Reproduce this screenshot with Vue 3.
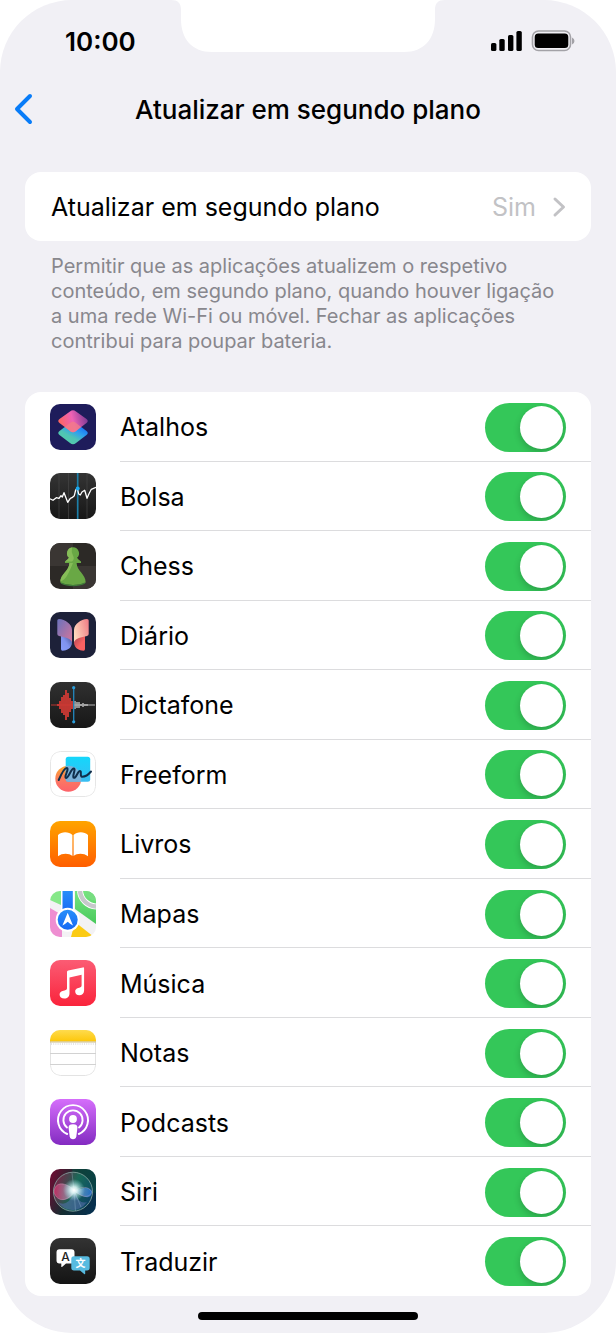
<script setup>
import { ref } from 'vue';

// Lista de aplicações com o estado de cada interruptor
var apps = ref([
  { id: 'atalhos', name: 'Atalhos', enabled: true },
  { id: 'bolsa', name: 'Bolsa', enabled: true },
  { id: 'chess', name: 'Chess', enabled: true },
  { id: 'diario', name: 'Diário', enabled: true },
  { id: 'dictafone', name: 'Dictafone', enabled: true },
  { id: 'freeform', name: 'Freeform', enabled: true },
  { id: 'livros', name: 'Livros', enabled: true },
  { id: 'mapas', name: 'Mapas', enabled: true },
  { id: 'musica', name: 'Música', enabled: true },
  { id: 'notas', name: 'Notas', enabled: true },
  { id: 'podcasts', name: 'Podcasts', enabled: true },
  { id: 'siri', name: 'Siri', enabled: true },
  { id: 'traduzir', name: 'Traduzir', enabled: true }
]);

// Barras do dictafone: [x, metade da altura]
const redBars = [[8, 1], [10, 4], [12, 8], [14, 10], [16, 15], [18, 12], [20, 7], [22, 4]];
const greyBars = [[25, 4], [27, 3], [29, 3], [31, 1], [33, 2], [35, 1], [37, 1]];
</script>

<template>
  <div class="phone">
    <div class="status-bar">
      <span class="time">10:00</span>
      <svg class="notch" width="274" height="52" viewBox="0 0 274 52">
        <path d="M0 0C7 0 10 3 10 10V19C10 39 21 52 41 52H233C253 52 264 39 264 19V10C264 3 267 0 274 0Z" fill="#fff" />
      </svg>
      <svg class="indicators" width="84" height="22" viewBox="0 0 84 22">
        <rect x="0" y="13" width="5.4" height="8" rx="1.6" />
        <rect x="8.3" y="9" width="5.4" height="12" rx="1.6" />
        <rect x="17" y="5" width="5.4" height="16" rx="1.6" />
        <rect x="25.4" y="1" width="5.4" height="20" rx="1.6" />
        <rect x="41.5" y="1" width="38" height="19.5" rx="6" fill="none" stroke="#a3a2a7" stroke-width="1.6" />
        <rect x="43.7" y="3.5" width="33.6" height="14.5" rx="3.5" />
        <path d="M81 7.5Q83.5 8.5 83.5 11T81 14.5Z" fill="#a3a2a7" />
      </svg>
    </div>

    <header class="nav">
      <button class="btn-back" type="button" aria-label="Voltar">
        <svg width="20" height="32" viewBox="0 0 20 32">
          <path d="M17 3L4 16L17 29" fill="none" stroke="#087cf8" stroke-width="4" stroke-linecap="round" stroke-linejoin="round" />
        </svg>
      </button>
      <h1>Atualizar em segundo plano</h1>
    </header>

    <main>
      <!-- Definição geral -->
      <button class="card setting" type="button">
        <span>Atualizar em segundo plano</span>
        <span class="setting-value">Sim</span>
        <svg width="14" height="22" viewBox="0 0 14 22">
          <path d="M3 3L11.5 11L3 19" fill="none" stroke="#c2c2c5" stroke-width="3" stroke-linecap="round" stroke-linejoin="round" />
        </svg>
      </button>
      <p class="note">
        Permitir que as aplicações atualizem o respetivo conteúdo, em segundo plano, quando houver ligação a uma rede Wi-Fi ou móvel. Fechar as aplicações contribui para poupar bateria.
      </p>

      <!-- Aplicações -->
      <ul class="card app-list">
        <li v-for="app in apps" :key="app.id" class="app-item">
          <svg class="app-icon" width="46" height="46" viewBox="0 0 46 46" aria-hidden="true">
            <g v-if="app.id === 'atalhos'">
              <linearGradient id="sc1" x1="0" y1="0.6" x2="1" y2="0.4">
                <stop offset="0" stop-color="#ff6659" />
                <stop offset="0.5" stop-color="#ee62b5" />
                <stop offset="1" stop-color="#7c3994" />
              </linearGradient>
              <linearGradient id="sc2" x1="0.2" y1="1" x2="0.8" y2="0.2">
                <stop offset="0" stop-color="#55cfa7" />
                <stop offset="0.4" stop-color="#4fc4b4" />
                <stop offset="0.7" stop-color="#2e9ff0" />
                <stop offset="1" stop-color="#1874f5" />
              </linearGradient>
              <rect width="46" height="46" fill="#1e1c5b" />
              <path d="M20 19Q23 16.5 26 19L36.5 27Q39 29 36.5 31L26 39Q23 41.5 20 39L9.5 31Q7 29 9.5 27Z" fill="url(#sc2)" />
              <path d="M20 7.5Q23 5 26 7.5L36.5 15Q39 17 36.5 19L26 27Q23 29.5 20 27L9.5 19Q7 17 9.5 15Z" fill="url(#sc1)" />
              <path d="M23 17.5Q24.5 17.5 26 19L31.2 23L26 27Q23 29.5 20 27L14.8 23L20 19Q21.5 17.5 23 17.5Z" fill="#f37d85" opacity="0.75" />
            </g>

            <g v-else-if="app.id === 'bolsa'">
              <linearGradient id="st1" x1="0" y1="0" x2="0" y2="1">
                <stop offset="0" stop-color="#343434" />
                <stop offset="1" stop-color="#171717" />
              </linearGradient>
              <rect width="46" height="46" fill="url(#st1)" />
              <path d="M9 0V46M18.5 0V46M37 0V46" stroke="#454545" stroke-width="0.7" />
              <path d="M27.7 0V46" stroke="#1d7fa8" stroke-width="1.7" />
              <path d="M0 25.7L3 27.3L6.3 24.7L9 25.3L11 22.7L12.3 24L14 19.7L17.7 29.3L20.3 25.3L22 24.7L24.3 22.7L25.7 17L27.3 15.7L28.7 21L30.3 22L32 19L34.7 17.3L37 25.3L39 20.7L41.3 16.3L46 14.3" fill="none" stroke="#fff" stroke-width="1.3" stroke-linejoin="round" />
              <circle cx="27.7" cy="15.5" r="2" fill="#1ba7ee" />
            </g>

            <g v-else-if="app.id === 'chess'">
              <rect width="46" height="46" fill="#2c2926" />
              <path d="M0 0H23V23H0ZM23 23H46V46H23Z" fill="#3a3633" />
              <path d="M23 4.3A6 6 0 0 1 27 14.8Q28 16.5 31 18.5V20H26.6C26.8 28 35.7 31 35.7 39.5Q32 42 23 42T10.3 39.5C10.3 31 19.2 28 19.4 20H15V18.5Q18 16.5 19 14.8A6 6 0 0 1 23 4.3Z" fill="#69a845" />
              <path d="M22 4.4A6 6 0 0 0 19 14.8Q18 16.5 15 18.5H22Q25 16 23 12.5T22 4.4ZM19.4 20C19.2 28 10.3 31 10.3 38.5Q15 37 18 31T23 20Z" fill="#86bd58" />
              <path d="M11 40Q16 42.7 23 42.7T35 40" fill="none" stroke="#3f7a3a" stroke-width="1.2" />
            </g>

            <g v-else-if="app.id === 'diario'">
              <linearGradient id="jr1" x1="0" y1="0" x2="1" y2="1">
                <stop offset="0" stop-color="#6a73bd" />
                <stop offset="1" stop-color="#d4759a" />
              </linearGradient>
              <linearGradient id="jr2" x1="0" y1="0.6" x2="1" y2="0.2">
                <stop offset="0" stop-color="#ffd9bd" />
                <stop offset="1" stop-color="#f18087" />
              </linearGradient>
              <linearGradient id="jr3" x1="0" y1="1" x2="1" y2="0">
                <stop offset="0" stop-color="#879dfb" />
                <stop offset="0.5" stop-color="#7f93ee" />
                <stop offset="1" stop-color="#485190" />
              </linearGradient>
              <linearGradient id="jr4" x1="0" y1="0" x2="1" y2="1">
                <stop offset="0" stop-color="#a94754" />
                <stop offset="0.6" stop-color="#fb6262" />
              </linearGradient>
              <rect width="46" height="46" fill="#1d2139" />
              <path d="M11 24C17 24 22 25 22 28V31C21.5 36 17 38.7 12.5 38.7Q11 38.7 11 37Z" fill="url(#jr3)" />
              <path d="M35 24C29 24 24 25 24 28V31C24.5 36 29 38.7 33.5 38.7Q35 38.7 35 37Z" fill="url(#jr4)" />
              <path d="M9 7C15 7.5 22 12 22 18V30C20 26 15 25.5 9 24Q7.3 23.5 7.3 22V8.5Q7.3 7 9 7Z" fill="url(#jr1)" />
              <path d="M37 7C31 7.5 24 12 24 18V30C26 26 31 25.5 37 24Q38.7 23.5 38.7 22V8.5Q38.7 7 37 7Z" fill="url(#jr2)" />
            </g>

            <g v-else-if="app.id === 'dictafone'">
              <linearGradient id="vm1" x1="0" y1="0" x2="0" y2="1">
                <stop offset="0" stop-color="#303030" />
                <stop offset="1" stop-color="#171717" />
              </linearGradient>
              <rect width="46" height="46" fill="url(#vm1)" />
              <path d="M1 23H23" stroke="#b93530" stroke-width="1" />
              <path d="M24 23H45" stroke="#b5b5b5" stroke-width="1" />
              <path v-for="bar in redBars" :key="bar[0]" :d="`M${bar[0]} ${23 - bar[1]}V${23 + bar[1]}`" stroke="#d23a35" stroke-width="1.8" />
              <path v-for="bar in greyBars" :key="bar[0]" :d="`M${bar[0]} ${23 - bar[1]}V${23 + bar[1]}`" stroke="#b5b5b5" stroke-width="1.5" />
              <path d="M23.7 5.5V40" stroke="#2487bd" stroke-width="1.3" />
              <circle cx="23.7" cy="5.7" r="1.6" fill="#2c9edb" />
              <circle cx="23.7" cy="39.8" r="1.6" fill="#2c9edb" />
            </g>

            <g v-else-if="app.id === 'freeform'">
              <linearGradient id="ff1" x1="0" y1="0" x2="0" y2="1">
                <stop offset="0" stop-color="#fba72c" />
                <stop offset="0.6" stop-color="#fb7663" />
                <stop offset="1" stop-color="#fd6269" />
              </linearGradient>
              <linearGradient id="ff2" x1="0" y1="0" x2="0" y2="1">
                <stop offset="0" stop-color="#14d7fb" />
                <stop offset="1" stop-color="#39bdf2" />
              </linearGradient>
              <rect x="0.5" y="0.5" width="45" height="45" rx="10" fill="#fff" stroke="#e6e6e6" />
              <circle cx="18.3" cy="27.7" r="13" fill="url(#ff1)" />
              <rect x="15.7" y="5.7" width="24.5" height="25" rx="2.5" fill="url(#ff2)" />
              <path d="M15.7 15A13 13 0 0 1 31 30.7H18Q15.7 30.7 15.7 28Z" fill="#8eaed2" opacity="0.8" />
              <path d="M8.7 29C11.5 22.5 14.5 16.5 17 17C19.5 17.5 13.5 26.5 16 27C18.5 27.3 21 17.5 23.8 17.5C26.3 17.5 21.5 26.5 24 26.8C26.5 27 27.5 20 30 20C32 20 29.5 25.5 32 25.7C35 25.8 38.5 23.5 41 20.5" fill="none" stroke="#102f4c" stroke-width="2" stroke-linecap="round" />
            </g>

            <g v-else-if="app.id === 'livros'">
              <linearGradient id="bk1" x1="0" y1="0" x2="0" y2="1">
                <stop offset="0" stop-color="#ffa400" />
                <stop offset="1" stop-color="#ff5e00" />
              </linearGradient>
              <rect width="46" height="46" fill="url(#bk1)" />
              <path d="M8 14C12 10 19 10.5 22.4 14V35C19 32 12 32 8 35.3ZM23.6 14C27 10.5 34 10 38 14V35.3C34 32 27 32 23.6 35Z" fill="#fff" />
            </g>

            <g v-else-if="app.id === 'mapas'">
              <linearGradient id="mp1" x1="0" y1="0" x2="0" y2="1">
                <stop offset="0" stop-color="#76e57f" />
                <stop offset="1" stop-color="#49c95c" />
              </linearGradient>
              <linearGradient id="mp2" x1="0" y1="0" x2="0" y2="1">
                <stop offset="0" stop-color="#288ef9" />
                <stop offset="1" stop-color="#1669f4" />
              </linearGradient>
              <rect width="46" height="46" fill="#f3f2f4" />
              <path d="M0 0H11V14L0 9Z" fill="#86e889" />
              <path d="M25 0H46V33L25 18Z" fill="url(#mp1)" />
              <path d="M0 17L12 24V46H0Z" fill="#ee8ed1" />
              <path d="M25 31L44 46H21Z" fill="#fbcb14" />
              <path d="M30 0A17 17 0 0 0 46 15.5" fill="none" stroke="#fff" stroke-width="6" />
              <path d="M30 0A17 17 0 0 0 46 15.5" fill="none" stroke="#c7c8cb" stroke-width="4.4" />
              <path d="M36 0A10 10 0 0 0 46 10V0Z" fill="#77dd80" />
              <rect x="11" y="0" width="13" height="22" fill="#fff" />
              <rect x="12.5" y="0" width="10.3" height="22" fill="url(#mp2)" />
              <circle cx="17.7" cy="28.7" r="12" fill="#fff" />
              <circle cx="17.7" cy="28.7" r="10" fill="url(#mp2)" />
              <path d="M17.7 21.8L23 34.6Q20 33 17.7 30.8Q15.4 33 12.4 34.6Z" fill="#fff" />
            </g>

            <g v-else-if="app.id === 'musica'">
              <linearGradient id="mu1" x1="0" y1="0" x2="0" y2="1">
                <stop offset="0" stop-color="#fb5c74" />
                <stop offset="1" stop-color="#fa233b" />
              </linearGradient>
              <rect width="46" height="46" fill="url(#mu1)" />
              <path d="M17 12Q17 10.8 18.2 10.5L32.8 7.4Q34.1 7.2 34.1 8.5V30.5C34.1 33.5 32 35.2 29.3 35.2C26.8 35.2 25.2 33.6 25.2 31.5C25.2 28.6 28 27.8 30 27.4Q31.6 27.1 31.6 25.5V14.8L19.5 17.4V33.5C19.5 36.5 17.3 38.5 14.4 38.5C11.5 38.5 9.6 37 9.6 34.7C9.6 31.8 12 30.8 14.5 30.4Q17 30.1 17 28.5Z" fill="#fff" />
            </g>

            <g v-else-if="app.id === 'notas'">
              <linearGradient id="nt1" x1="0" y1="0" x2="0" y2="1">
                <stop offset="0" stop-color="#fedb4e" />
                <stop offset="1" stop-color="#fdc70a" />
              </linearGradient>
              <rect x="0.5" y="0.5" width="45" height="45" rx="10" fill="#fff" stroke="#e3e3e3" />
              <rect width="46" height="11.5" fill="url(#nt1)" />
              <path d="M0 12H46" stroke="#c8b987" stroke-width="1" />
              <path d="M1 14H46" stroke="#c4c4c4" stroke-width="0.9" stroke-dasharray="1 1.2" />
              <path d="M0 23.5H46M0 34.5H46" stroke="#d2d2d2" stroke-width="1" />
            </g>

            <g v-else-if="app.id === 'podcasts'">
              <linearGradient id="pc1" x1="0" y1="0" x2="0" y2="1">
                <stop offset="0" stop-color="#d56efb" />
                <stop offset="1" stop-color="#832bc1" />
              </linearGradient>
              <rect width="46" height="46" fill="url(#pc1)" />
              <g fill="none" stroke="#fff" stroke-width="1.9" stroke-linecap="round">
                <path d="M17.2 35A15 15 0 1 1 28.8 35" />
                <path d="M17 28.5A9.6 9.6 0 1 1 29 28.5" />
              </g>
              <circle cx="23" cy="20" r="3.9" fill="#fff" />
              <path d="M23 25.3C26 25.3 27.6 26.3 27.4 28.8L26.3 37.5Q25.8 40.3 23 40.3T19.7 37.5L18.6 28.8C18.4 26.3 20 25.3 23 25.3Z" fill="#fff" />
            </g>

            <g v-else-if="app.id === 'siri'">
              <linearGradient id="si1" x1="0" y1="0.3" x2="1" y2="0.7">
                <stop offset="0" stop-color="#641032" />
                <stop offset="0.45" stop-color="#152d31" />
                <stop offset="1" stop-color="#06304e" />
              </linearGradient>
              <linearGradient id="si2" x1="0" y1="0.5" x2="1" y2="0.5">
                <stop offset="0" stop-color="#d12f68" />
                <stop offset="0.5" stop-color="#8ca9b8" />
                <stop offset="1" stop-color="#2677d8" />
              </linearGradient>
              <linearGradient id="si4" x1="0" y1="0.3" x2="1" y2="0.7">
                <stop offset="0" stop-color="#8e2a50" />
                <stop offset="0.5" stop-color="#1f8068" />
                <stop offset="1" stop-color="#0d4c78" />
              </linearGradient>
              <radialGradient id="si3">
                <stop offset="0" stop-color="#fff" />
                <stop offset="0.3" stop-color="#e8ffff" stop-opacity="0.85" />
                <stop offset="1" stop-color="#9fe3e9" stop-opacity="0" />
              </radialGradient>
              <rect width="46" height="46" fill="url(#si1)" />
              <path d="M22 0H46V24L25 20Z" fill="#075344" opacity="0.5" />
              <circle cx="23" cy="22.7" r="19.5" fill="url(#si4)" fill-opacity="0.65" stroke="#8ba9a5" stroke-width="1" stroke-opacity="0.8" />
              <path d="M8 33Q17 39 25 23Q29 36 37 33Q30 42 22 41Q12 40 8 33Z" fill="#5a6fae" opacity="0.55" />
              <path d="M4 23C5 11 17 14 24 21C30 22 36 15 42 22C42 31 34 29 25 23C19 33 7 34 4 23Z" fill="url(#si2)" opacity="0.8" />
              <path d="M4 23C5 11 17 14 24 21C19 33 7 34 4 23ZM25 22C30 18 38 16 42 23C39 30 31 28 25 22Z" fill="none" stroke="#d6a9c6" stroke-width="0.5" opacity="0.7" />
              <path d="M24 21L25.5 42M24 21L31 38M24 21L22 4" stroke="#a9cfe0" stroke-width="0.6" opacity="0.5" />
              <circle cx="24" cy="21" r="11" fill="url(#si3)" />
            </g>

            <g v-else>
              <linearGradient id="tr1" x1="0" y1="0" x2="0" y2="1">
                <stop offset="0" stop-color="#333" />
                <stop offset="1" stop-color="#141414" />
              </linearGradient>
              <rect width="46" height="46" fill="url(#tr1)" />
              <path d="M9.5 11.3H21.5Q24.5 11.3 24.5 14.3V22.5Q24.5 25.5 21.5 25.5H16L12 29Q11.3 29.3 11.3 28.4V25.5H9.5Q6.5 25.5 6.5 22.5V14.3Q6.5 11.3 9.5 11.3Z" fill="#fff" />
              <path d="M24 18.3H37Q39.7 18.3 39.7 21V29.7Q39.7 32.4 37 32.4H35.2V35.5Q35.2 36.8 34.2 36L30 32.4H24Q21.3 32.4 21.3 29.7V21Q21.3 18.3 24 18.3Z" fill="#57bbe0" />
              <text class="glyph" x="15.5" y="22.8" font-size="12" fill="#222">A</text>
              <text class="glyph glyph-cjk" x="30.5" y="29.3" font-size="10" fill="#fff">文</text>
            </g>
          </svg>

          <div class="app-row">
            <label :for="app.id">{{ app.name }}</label>
            <input :id="app.id" v-model="app.enabled" class="switch" type="checkbox" role="switch" />
          </div>
        </li>
      </ul>
    </main>

    <div class="home-indicator"></div>
  </div>
</template>

<style>
body {
  margin: 0;
  background: #fff;
}
</style>

<style scoped>
.phone {
  display: flex;
  flex-direction: column;
  box-sizing: border-box;
  min-height: 100vh;
  padding-bottom: 13px;
  border-radius: 72px;
  background: #f1f0f5;
  color: #000;
  font-family: Inter, "Noto Sans CJK SC", sans-serif;
  font-size: 25px;
}

.status-bar {
  display: grid;
  grid-template-columns: 1fr auto 1fr;
  align-items: center;
  height: 82px;
}

.time {
  padding-left: 65px;
  font-size: 26px;
  font-weight: 600;
}

.notch {
  align-self: start;
}

.indicators {
  justify-self: end;
  margin-right: 41px;
}

.nav {
  display: grid;
  grid-template-columns: 48px 1fr 48px;
  align-items: center;
  height: 54px;
}

.nav h1 {
  margin: 0;
  text-align: center;
  font-size: 26px;
  font-weight: 500;
}

.btn-back {
  display: flex;
  padding: 0 0 0 13px;
  border: none;
  background: none;
  cursor: pointer;
}

main {
  display: flex;
  flex: 1;
  flex-direction: column;
  padding: 36px 25px 0;
}

.card {
  border-radius: 16px;
  background: #fff;
}

.setting {
  display: flex;
  align-items: center;
  gap: 16px;
  min-height: 69px;
  padding: 0 25px 0 26px;
  border: none;
  color: inherit;
  font: inherit;
  cursor: pointer;
}

.setting-value {
  margin-left: auto;
  color: #c2c2c5;
}

.note {
  margin: 13px 26px 38px;
  color: #88878d;
  font-size: 20px;
  line-height: 25px;
}

.app-list {
  display: grid;
  flex: 1;
  grid-auto-rows: 1fr;
  margin: 0;
  padding: 0;
  list-style: none;
}

.app-item {
  display: flex;
  align-items: center;
  gap: 24px;
  min-height: 64px;
  padding-left: 25px;
}

.app-icon {
  flex: none;
  border-radius: 10px;
  overflow: hidden;
}

.app-row {
  display: flex;
  flex: 1;
  align-self: stretch;
  align-items: center;
  justify-content: space-between;
  padding: 2px 25px 0 0;
  border-bottom: 1px solid #dcdcde;
}

.app-item:last-child .app-row {
  border-bottom-color: transparent;
}

.glyph {
  font-weight: 500;
  text-anchor: middle;
}

.glyph-cjk {
  font-family: "Noto Sans CJK SC", sans-serif;
  font-weight: 700;
}

.switch {
  box-sizing: border-box;
  width: 81px;
  height: 49px;
  margin: 0;
  padding: 3px;
  border-radius: 25px;
  background: #e9e9eb;
  overflow: hidden;
  appearance: none;
  cursor: pointer;
}

.switch::before {
  content: "";
  display: block;
  width: 43px;
  height: 43px;
  border-radius: 50%;
  background: #fff;
  box-shadow: 0 3px 7px rgba(0, 0, 0, 0.2);
}

.switch:checked {
  background: #34c759;
}

.switch:checked::before {
  margin-left: auto;
}

.home-indicator {
  align-self: center;
  width: 220px;
  height: 8px;
  margin-top: 16px;
  border-radius: 4px;
  background: #000;
}
</style>
